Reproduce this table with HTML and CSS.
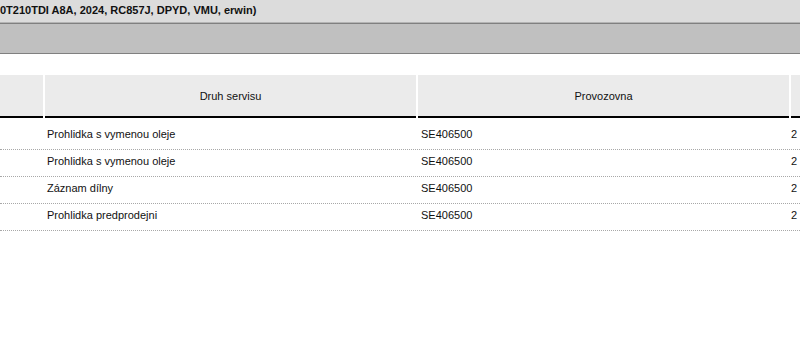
FILE: index.html
```html
<!DOCTYPE html>
<html>
<head>
<meta charset="utf-8">
<link rel="stylesheet" href="styles.css">
</head>
<body>
<div class="titlebar"><span class="title">0T210TDI A8A, 2024, RC857J, DPYD, VMU, erwin)</span></div>
<div class="toolbar"></div>
<div class="content">
  <div class="table">
    <div class="head">
      <div class="th"></div>
      <div class="th">Druh servisu</div>
      <div class="th">Provozovna</div>
      <div class="th"></div>
    </div>
    <div class="body">
      <div class="tr"><div class="td"></div><div class="td">Prohlidka s vymenou oleje</div><div class="td">SE406500</div><div class="td">2</div></div>
      <div class="tr"><div class="td"></div><div class="td">Prohlidka s vymenou oleje</div><div class="td">SE406500</div><div class="td">2</div></div>
      <div class="tr"><div class="td"></div><div class="td">Záznam dílny</div><div class="td">SE406500</div><div class="td">2</div></div>
      <div class="tr"><div class="td"></div><div class="td">Prohlidka predprodejni</div><div class="td">SE406500</div><div class="td">2</div></div>
    </div>
  </div>
</div>
</body>
</html>
```
FILE: styles.css
```css
html, body {
  margin: 0;
  padding: 0;
  background: #ffffff;
  overflow: hidden;
  font-family: "Liberation Sans", Arial, sans-serif;
  color: #000;
}
.titlebar {
  height: 22px;
  background: #dcdcdc;
  border-bottom: 1px solid #b4b4b4;
  overflow: hidden;
  white-space: nowrap;
}
.title {
  display: block;
  font-size: 11px;
  font-weight: bold;
  line-height: 11px;
  padding-top: 5px;
  padding-left: 0;
  color: #111;
}
.toolbar {
  height: 29px;
  background: #c0c0c0;
  border-top: 1px solid #808080;
  border-bottom: 1px solid #808080;
}
.content {
  padding-top: 21px;
}
.table {
  width: 860px;
}
.head, .tr {
  display: grid;
  grid-template-columns: 43px 371px 371px 1fr;
  column-gap: 2px;
}
.th {
  height: 41px;
  background: #ebebeb;
  border-bottom: 2px solid #000;
  font-size: 11px;
  display: flex;
  align-items: center;
  justify-content: center;
  color: #111;
}
.body {
  padding-top: 5px;
}
.tr {
  height: 26px;
  border-bottom: 1px dotted #a8a8a8;
}
.td {
  font-size: 11px;
  padding-left: 2px;
  padding-top: 6px;
  line-height: 11px;
  white-space: nowrap;
  overflow: hidden;
  color: #111;
}
.td:nth-child(3) {
  padding-left: 3px;
}
.td:nth-child(4) {
  padding-left: 0;
}
```
